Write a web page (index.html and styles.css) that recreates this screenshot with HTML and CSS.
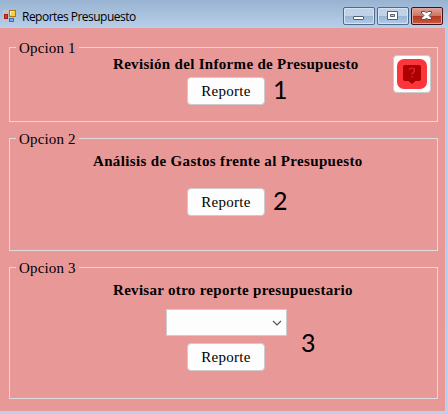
FILE: index.html
```html
<!DOCTYPE html>
<html lang="es">
<head>
<meta charset="utf-8">
<title>Reportes Presupuesto</title>
<link rel="stylesheet" href="styles.css">
</head>
<body>
<div class="window">
  <header class="titlebar">
    <svg class="app-icon" width="14" height="14" viewBox="0 0 14 14">
      <path d="M0.500 1.500h12v11h-12z" fill="#b9c2cd" stroke="#c9c5c2"/>
      <rect x="6.500" y="1.500" width="6" height="6" fill="#f6cf43" stroke="#a87b12"/>
      <path d="M7.500 6V2.500H11" fill="none" stroke="#fff0a0"/>
      <rect x="1.500" y="5.500" width="3" height="4" fill="#d83a2d" stroke="#a51c18"/>
      <rect x="6.500" y="9.500" width="4" height="3" fill="#75a7f4" stroke="#3d6ed0"/>
    </svg>
    <h1 class="title">Reportes Presupuesto</h1>
    <div class="controls">
      <button class="control" aria-label="Minimizar"><svg width="30" height="16" viewBox="0 0 30 16"><rect x="9.500" y="8.500" width="10" height="3" rx="0.500" fill="#fff" stroke="#535d6b"/></svg></button>
      <button class="control" aria-label="Maximizar"><svg width="30" height="16" viewBox="0 0 30 16"><path fill-rule="evenodd" d="M9.500 3.500h10v8h-10zM12.500 6.500v2h4v-2z" fill="#fff" stroke="#535d6b"/></svg></button>
      <button class="control close" aria-label="Cerrar"><svg width="30" height="16" viewBox="0 0 30 16"><path d="M9.500 3.500h3.500l1.500 1.500 1.500-1.500h3.500v1.500L17 7.500l2.500 2.500v1.500H16L14.500 10 13 11.500H9.500V10L12 7.500 9.500 5z" fill="#fff" stroke="#564c55"/></svg></button>
    </div>
  </header>
  <main class="form">
    <fieldset class="group group-1">
      <legend>Opcion 1</legend>
      <h2 class="heading h-1">Revisión del Informe de Presupuesto</h2>
      <div class="row"><button class="report">Reporte</button><span class="num">1</span></div>
      <button class="help" aria-label="Ayuda">
        <svg width="30" height="30" viewBox="0 0 30 30">
          <rect width="30" height="30" rx="7" fill="#fa353b"/>
          <path d="M8 6h14q2 0 2 2v12q0 2-2 2h-3.500L15 25l-3.500-3H8q-2 0-2-2V8q0-2 2-2z" fill="#ad0003"/>
          <path d="M12.500 11q0-2 2.500-2t2.500 2.300q0 1.200-1.300 2.100-1.200.8-1.200 2.200M15 17v1.500" fill="none" stroke="#e22a30" stroke-width="1.200"/>
        </svg>
      </button>
    </fieldset>
    <fieldset class="group group-2">
      <legend>Opcion 2</legend>
      <h2 class="heading h-2">Análisis de Gastos frente al Presupuesto</h2>
      <div class="row"><button class="report">Reporte</button><span class="num">2</span></div>
    </fieldset>
    <fieldset class="group group-3">
      <legend>Opcion 3</legend>
      <h2 class="heading h-3">Revisar otro reporte presupuestario</h2>
      <div class="choice">
        <div class="stack">
          <div class="combo" role="combobox" aria-label="Reporte"><svg width="10" height="6" viewBox="0 0 10 6"><path d="M1 1l4 4 4-4" fill="none" stroke="#555" stroke-width="1.200"/></svg></div>
          <button class="report">Reporte</button>
        </div>
        <span class="num">3</span>
      </div>
    </fieldset>
  </main>
</div>
</body>
</html>
```
FILE: styles.css
```css
* { box-sizing: border-box; }
body { margin: 0; overflow: hidden; }
button { padding: 0; }
.window {
  width: 448px;
  height: 414px;
  background: linear-gradient(#98b3d1 0, #b8cfe9 28px, #b9d0ee 100%);
}
.titlebar {
  height: 28px;
  display: flex;
  align-items: flex-start;
  padding: 7px 5px 0 3px;
}
.app-icon { margin-top: 2px; }
.title {
  margin: 1px 0 0 5px;
  font: 400 12px/17px "Open Sans", sans-serif;
  letter-spacing: -0.52px;
  white-space: nowrap;
  color: #000;
}
.controls { display: flex; gap: 2px; margin-left: auto; }
.control {
  width: 32px;
  height: 18px;
  border: 1px solid #536b8a;
  border-radius: 2px;
  background: linear-gradient(#bfd2e7 0 48%, #98b4d3 50%, #b2cce8);
  box-shadow: inset 0 0 0 1px #d5e3f2;
}
.control svg { display: block; }
.close {
  border-color: #421019;
  background: linear-gradient(#dfa397 0, #cf7465 48%, #b43822 50%, #c8583f);
  box-shadow: inset 0 0 0 1px #dfa69d;
}
.form {
  width: 445px;
  height: 383px;
  padding: 12px 7px 0 9px;
  background: #e99898;
  font-family: "Liberation Serif", serif;
}
.group {
  position: relative;
  margin: 0;
  padding: 0;
  border: 1px solid #dcdcdc;
  min-width: 0;
}
.group-1 { height: 82px; }
.group-2 { height: 121px; margin-top: 8px; }
.group-3 { height: 140px; margin-top: 8px; }
legend {
  margin-left: 6px;
  padding: 0 3px;
  height: 16px;
  font-size: 15px;
  line-height: 19px;
  letter-spacing: 0.15px;
}
.group-1 legend { height: 15px; line-height: 17px; }
.heading {
  margin: 0;
  font-size: 15px;
  line-height: 18px;
  font-weight: 700;
  white-space: nowrap;
}
.h-1 { padding-left: 103px; letter-spacing: 0.31px; }
.h-2 { padding: 6px 0 0 83px; letter-spacing: 0.35px; }
.h-3 { padding: 6px 0 0 103px; letter-spacing: 0.3px; }
.row { display: flex; padding-left: 177px; margin-top: 4px; }
.group-2 .row { margin-top: 18px; }
.report {
  width: 78px;
  height: 28px;
  border: 1px solid #ccc;
  border-radius: 4px;
  background: #fdfdfd;
  font: 15px/26px "Liberation Serif", serif;
  letter-spacing: 0.3px;
  color: #000;
}
.num {
  margin-left: 9px;
  font: 25px/24px Lato, sans-serif;
  color: #000;
}
.row .num { margin-left: 8px; }
.help {
  position: absolute;
  top: 0;
  right: 6px;
  width: 38px;
  height: 38px;
  display: grid;
  place-items: center;
  border: 1px solid #ccc;
  border-radius: 4px;
  background: #fdfdfd;
}
.choice { display: flex; align-items: center; padding-left: 156px; margin-top: 10px; }
.stack { display: flex; flex-direction: column; gap: 7px; }
.stack .report { margin-left: 21px; }
.combo {
  width: 121px;
  height: 27px;
  display: flex;
  align-items: center;
  justify-content: flex-end;
  padding-right: 4px;
  border: 1px solid #ccc;
  background: #fdfdfd;
}
.choice .num { margin: 4px 0 0 14px; }
```
